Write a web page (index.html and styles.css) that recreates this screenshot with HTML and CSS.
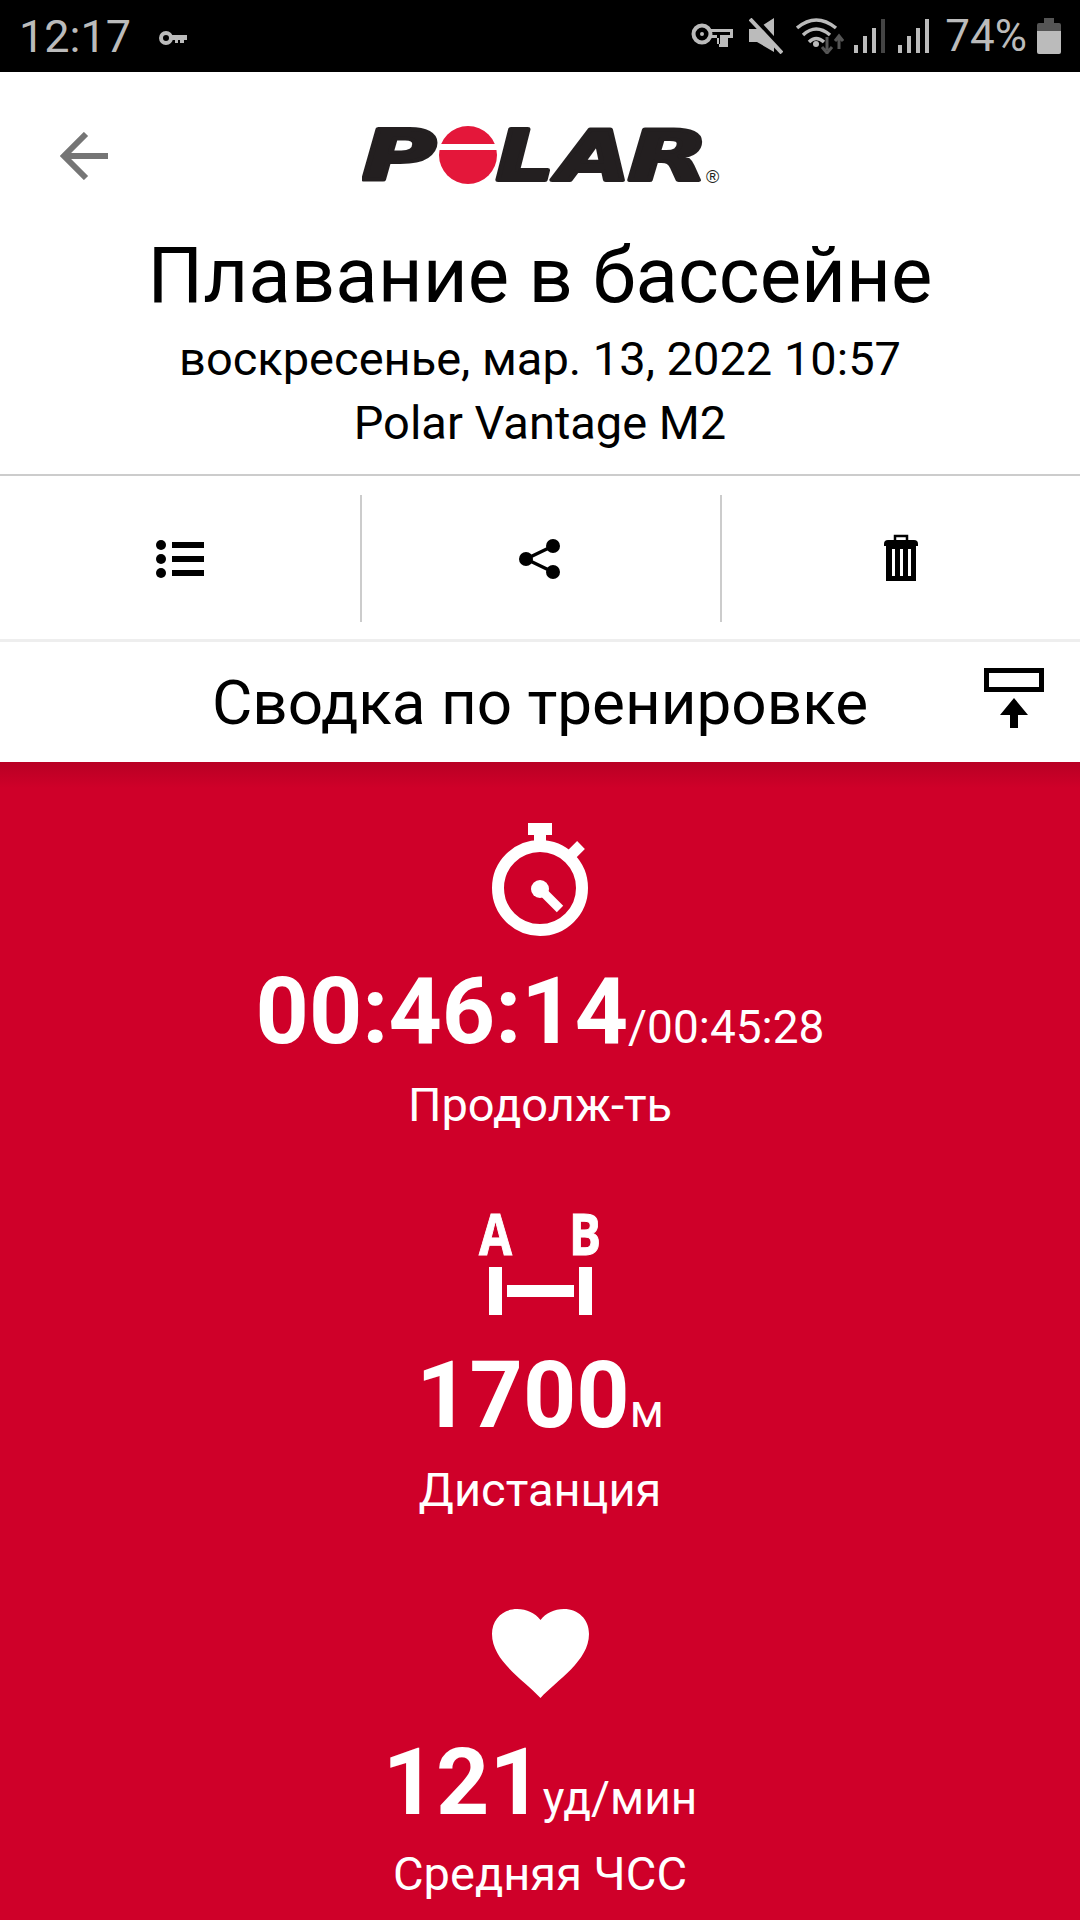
FILE: index.html
```html
<!DOCTYPE html>
<html lang="ru">
<head>
  <meta charset="UTF-8" />
  <meta name="viewport" content="width=device-width, initial-scale=1.0" />
  <title>Плавание в бассейне</title>
  <link rel="stylesheet" href="styles.css">
</head>
<body>
  <div class="status-bar">
    <div class="status-left">
      <span class="clock">12:17</span>
      <svg class="vpn-small" viewBox="0 0 28 16"><circle cx="7" cy="8" r="5" fill="none" stroke="#bbb" stroke-width="4"/><path d="M12 5h16v5h-3v3h-4v-3h-2v3h-3v-3h-4z" fill="#bbb"/></svg>
    </div>
    <div class="status-right">
      <svg class="st-key" viewBox="0 0 42 28"><circle cx="11" cy="12" r="8.500" fill="none" stroke="#bbb" stroke-width="4"/><circle cx="11" cy="12" r="2" fill="#bbb"/><path d="M20 7h22v9h-5v9h-9v-9h-8v-3h6v9h3v-9h10v-3h-19z" fill="#bbb"/></svg>
      <svg class="st-mute" viewBox="0 0 34 36"><path d="M0 11h8L25 0v34L8 24H0z" fill="#bbb"/><path d="M5 0l31 34" stroke="#000" stroke-width="5"/><path d="M1 1l32 34" stroke="#bbb" stroke-width="4"/></svg>
      <svg class="st-wifi" viewBox="0 0 48 36"><path d="M1 10Q20-6 40 10M7 17Q20 5 34 17M13 24Q20 17 28 24" fill="none" stroke="#bbb" stroke-width="3.500"/><circle cx="20" cy="26" r="3" fill="#bbb"/><path d="M31 19v13M26 29l5 6 5-6" fill="none" stroke="#555" stroke-width="3"/><path d="M43 31V18M39 23l4-5 4 5" fill="none" stroke="#555" stroke-width="3"/></svg>
      <svg class="st-signal" viewBox="0 0 31 34"><rect x="0" y="26" width="4" height="8" fill="#bbb"/><rect x="9" y="17" width="4" height="17" fill="#bbb"/><rect x="18" y="9" width="4" height="25" fill="#bbb"/><rect x="27" y="0" width="4" height="34" fill="#444"/></svg>
      <svg class="st-signal" viewBox="0 0 31 34"><rect x="0" y="26" width="4" height="8" fill="#bbb"/><rect x="9" y="17" width="4" height="17" fill="#bbb"/><rect x="18" y="9" width="4" height="25" fill="#bbb"/><rect x="27" y="0" width="4" height="34" fill="#bbb"/></svg>
      <span class="battery-text">74%</span>
      <svg class="st-battery" viewBox="0 0 24 36"><path d="M7 0h10v5h5q2 0 2 2v6H0V7q0-2 2-2h5z" fill="#555"/><path d="M0 13h24v21q0 2-2 2H2q-2 0-2-2z" fill="#bbb"/></svg>
    </div>
  </div>

  <header class="top-bar">
    <div class="logo-row">
      <svg class="back-icon" viewBox="0 0 48 48"><path d="M26 2L4 24l22 22M4 24h44" fill="none" stroke="#757575" stroke-width="6"/></svg>
      <svg class="logo" viewBox="0 -20 360 90">
        <text class="logo-letter" x="0" y="53" textLength="74" lengthAdjust="spacingAndGlyphs">P</text>
        <circle cx="106" cy="28" r="29" fill="#e4173a"/>
        <rect x="76" y="17" width="60" height="6" fill="#fff"/>
        <text class="logo-letter" x="134" y="53" textLength="58" lengthAdjust="spacingAndGlyphs">L</text>
        <text class="logo-letter" x="196" y="53" textLength="72" lengthAdjust="spacingAndGlyphs">A</text>
        <text class="logo-letter" x="266" y="53" textLength="80" lengthAdjust="spacingAndGlyphs">R</text>
        <text class="logo-reg" x="344" y="56">®</text>
      </svg>
    </div>
    <h1 class="title">Плавание в бассейне</h1>
    <div class="subtitle">воскресенье, мар. 13, 2022 10:57</div>
    <div class="subtitle device">Polar Vantage M2</div>
  </header>

  <div class="toolbar">
    <div class="tool">
      <svg class="icon-list" viewBox="0 0 48 38"><circle cx="5" cy="5" r="5"/><circle cx="5" cy="19" r="5"/><circle cx="5" cy="33" r="5"/><rect x="16" y="2" width="32" height="6"/><rect x="16" y="16" width="32" height="6"/><rect x="16" y="30" width="32" height="6"/></svg>
    </div>
    <div class="tool">
      <svg class="icon-share" viewBox="0 0 42 40"><circle cx="7" cy="20" r="7"/><circle cx="34" cy="7" r="7"/><circle cx="34" cy="33" r="7"/><path d="M7 20L34 7M7 20l27 13" stroke="#000" stroke-width="3.500"/></svg>
    </div>
    <div class="tool">
      <svg class="icon-trash" viewBox="0 0 34 47"><path d="M11 7V2h12v5" fill="none" stroke="#000" stroke-width="2.500"/><path d="M0 10q0-4 4-4h26q4 0 4 4v2H0z"/><path d="M2 12h30v35H2zM8 15v27h3V15zM16 15v27h3V15zM24 15v27h3V15z" fill-rule="evenodd"/></svg>
    </div>
  </div>

  <div class="section-head">
    <span class="section-spacer"></span>
    <h2 class="section-title">Сводка по тренировке</h2>
    <svg class="icon-pin" viewBox="0 0 60 60"><rect x="2.500" y="2.500" width="55" height="19" fill="none" stroke="#000" stroke-width="5"/><path d="M30 30l14 17h-10v13h-8V47H16z"/></svg>
  </div>

  <main class="summary">
    <section class="stat stat-time">
      <svg class="icon-watch" viewBox="0 0 96 118"><rect x="36" y="0" width="24" height="12" fill="#fff"/><rect x="42" y="10" width="12" height="12" fill="#fff"/><path d="M76 35l13-13" stroke="#fff" stroke-width="11"/><circle cx="48" cy="65" r="42" fill="none" stroke="#fff" stroke-width="12"/><circle cx="48" cy="66" r="9" fill="#fff"/><path d="M48 66l20 20" stroke="#fff" stroke-width="9"/></svg>
      <div class="value"><b>00:46:14</b><span class="unit">/00:45:28</span></div>
      <div class="label">Продолж-ть</div>
    </section>

    <section class="stat stat-distance">
      <svg class="icon-ab" viewBox="-8 -20 138 122">
        <text class="ab-text" x="0" y="42" textLength="33" lengthAdjust="spacingAndGlyphs">A</text>
        <text class="ab-text" x="90" y="42" textLength="32" lengthAdjust="spacingAndGlyphs">B</text>
        <rect x="10" y="54" width="13" height="48" fill="#fff"/>
        <rect x="28" y="72" width="67" height="12" fill="#fff"/>
        <rect x="100" y="54" width="13" height="48" fill="#fff"/>
      </svg>
      <div class="value"><b>1700</b><span class="unit">м</span></div>
      <div class="label">Дистанция</div>
    </section>

    <section class="stat stat-heart">
      <svg class="icon-heart" viewBox="0 0 97 90"><path d="M48.500 89C32 71 0 52 0 25 0 10 11 0 25 0c10 0 18 4 23.500 11C54 4 62 0 72 0c14 0 25 10 25 25 0 27-32 46-48.500 64z" fill="#fff"/></svg>
      <div class="value"><b>121</b><span class="unit">уд/мин</span></div>
      <div class="label">Средняя ЧСС</div>
    </section>
  </main>
</body>
</html>
```

FILE: styles.css
```css
* {
  box-sizing: border-box;
}
body {
  font-family: Roboto, "Noto Sans", sans-serif;
  margin: 0;
  width: 1080px;
  height: 1920px;
  overflow: hidden;
  background: #cf0029;
  color: #000;
}
svg {
  display: block;
  flex: none;
}

/* status bar */
.status-bar {
  height: 72px;
  background: #000;
  color: #bbb;
  display: flex;
  justify-content: space-between;
  align-items: center;
  padding: 0 19px 0 19px;
}
.status-left, .status-right {
  display: flex;
  align-items: center;
}
.clock {
  font-size: 45px;
  font-weight: 400;
}
.vpn-small {
  width: 28px;
  height: 16px;
  margin: 3px 0 0 28px;
}
.st-key {
  width: 42px;
  height: 28px;
  margin-right: 16px;
}
.st-mute {
  width: 34px;
  height: 36px;
  margin-right: 13px;
}
.st-wifi {
  width: 48px;
  height: 36px;
  margin-right: 10px;
}
.st-signal {
  width: 31px;
  height: 34px;
  margin-right: 13px;
}
.battery-text {
  font-size: 44px;
  margin: 0 10px 0 3px;
}
.st-battery {
  width: 24px;
  height: 36px;
}

/* white header */
.top-bar {
  background: #fff;
  height: 404px;
  text-align: center;
  border-bottom: 2px solid #ccc;
  padding-top: 35px;
}
.logo-row {
  display: grid;
  grid-template-columns: 60px 48px 254px 360px;
  height: 90px;
}
.back-icon {
  grid-column: 2;
  width: 48px;
  height: 48px;
  margin-top: 25px;
}
.logo {
  grid-column: 4;
  width: 360px;
  height: 90px;
}
.logo-letter {
  font-family: "DejaVu Sans", sans-serif;
  font-weight: 700;
  font-style: italic;
  font-size: 70px;
  fill: #231f20;
  stroke: #231f20;
  stroke-width: 4px;
  stroke-linejoin: round;
}
.logo-reg {
  font-family: "Liberation Sans", sans-serif;
  font-size: 18px;
  fill: #231f20;
}
.title {
  font-size: 78px;
  font-weight: 400;
  line-height: 86px;
  margin: 36px 0 0 0;
}
.subtitle {
  font-size: 47px;
  line-height: 62px;
  margin-top: 9px;
}
.device {
  margin-top: 2px;
}

/* toolbar */
.toolbar {
  background: #fff;
  height: 166px;
  display: grid;
  grid-template-columns: 360px 360px 360px;
  padding: 19px 0 17px;
  border-bottom: 3px solid #eee;
}
.tool {
  display: flex;
  align-items: center;
  justify-content: center;
  border-left: 2px solid #ccc;
}
.tool:first-child {
  border-left: none;
}
.icon-list {
  width: 48px;
  height: 38px;
}
.icon-share {
  width: 42px;
  height: 40px;
  margin-right: 2px;
}
.icon-trash {
  width: 34px;
  height: 47px;
  margin-bottom: 3px;
}

/* section title */
.section-head {
  background: #fff;
  height: 120px;
  display: grid;
  grid-template-columns: 60px 1fr 60px;
  align-items: center;
  padding: 0 36px;
}
.section-title {
  font-size: 62px;
  font-weight: 400;
  margin: 0;
  text-align: center;
}
.icon-pin {
  width: 60px;
  height: 60px;
  margin-bottom: 8px;
}

/* red summary */
.summary {
  background: linear-gradient(#b80024 0, #cf0029 26px);
  color: #fff;
  height: 1158px;
  padding-top: 61px;
  text-align: center;
}
.stat {
  display: flex;
  flex-direction: column;
  align-items: center;
}
.value {
  line-height: 100px;
  font-size: 46px;
}
.value b {
  font-size: 93px;
  font-weight: 700;
}
.stat-distance {
  margin-top: 58px;
}
.stat-heart {
  margin-top: 89px;
}
.stat-time .value {
  margin-top: 21px;
}
.stat-distance .value {
  margin-top: 31px;
}
.stat-heart .value {
  margin-top: 34px;
}
.label {
  font-size: 47px;
  line-height: 60px;
  margin-top: -2px;
}
.stat-distance .label {
  margin-top: -1px;
}
.stat-heart .label {
  margin-top: -4px;
}
.icon-watch {
  width: 96px;
  height: 118px;
}
.icon-ab {
  width: 138px;
  height: 122px;
}
.ab-text {
  font-family: "Open Sans", sans-serif;
  font-weight: 700;
  font-size: 58px;
  fill: #fff;
  stroke: #fff;
  stroke-width: 1px;
}
.icon-heart {
  width: 97px;
  height: 90px;
}
```
